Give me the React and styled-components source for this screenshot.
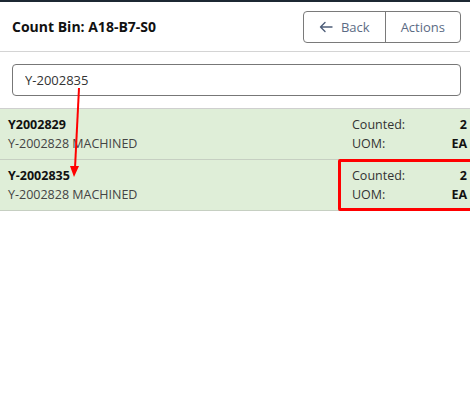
import React from "react";
import styled, { createGlobalStyle } from "styled-components";

const Global = createGlobalStyle`
  html, body { margin: 0; padding: 0; background: #fff; }
  body { font-family: "Open Sans", "Noto Sans", sans-serif; color: #212529; }
`;

const Page = styled.div`
  position: relative;
  width: 470px;
  height: 417px;
  border-top: 2px solid #1c2833;
  box-sizing: border-box;
  overflow: hidden;
`;

const Header = styled.div`
  display: flex;
  align-items: center;
  justify-content: space-between;
  height: 49px;
  padding: 0 9px 0 12px;
  border-bottom: 1px solid #d4d4d4;
`;

const Title = styled.h1`
  margin: 0;
  font-size: 14px;
  font-weight: 700;
  color: #111;
`;

const ButtonGroup = styled.div`
  display: flex;
  height: 32px;
  border: 1px solid #7a7a7a;
  border-radius: 4px;
  box-sizing: border-box;
`;

const GroupButton = styled.button`
  display: flex;
  align-items: center;
  gap: 8px;
  padding: 0 ${p => p.$pad}px;
  border: none;
  border-left: ${p => (p.$divider ? "1px solid #7a7a7a" : "none")};
  background: transparent;
  font-family: inherit;
  font-size: 13px;
  color: #5b6b84;
`;

const SearchArea = styled.div`
  padding: 12px 9px 12px 12px;
  border-bottom: 1px solid #cfcfcf;
`;

const SearchInput = styled.input`
  display: block;
  width: 100%;
  height: 32px;
  box-sizing: border-box;
  padding: 0 12px;
  border: 1px solid #777;
  border-radius: 4px;
  font-family: inherit;
  font-size: 13px;
  color: #333;
  outline: none;
`;

const Row = styled.div`
  display: flex;
  justify-content: space-between;
  align-items: center;
  height: 50px;
  padding: 0 3px 0 8px;
  background: #dfeed8;
  border-bottom: 1px solid #c6cfc2;
  font-size: 12.5px;
  line-height: 19px;
`;

const ItemInfo = styled.div`
  display: flex;
  flex-direction: column;
`;

const ItemCode = styled.span`
  font-weight: 700;
  color: #111;
`;

const ItemDesc = styled.span`
  color: #444;
`;

const Stats = styled.div`
  display: grid;
  grid-template-columns: auto 1fr;
  width: 115px;
  color: #333;
`;

const StatValue = styled.span`
  font-weight: 700;
  text-align: right;
  color: #111;
`;

const Highlight = styled.div`
  position: absolute;
  left: 338px;
  top: 157px;
  width: 140px;
  height: 52px;
  border: 3px solid #f00;
  border-radius: 2px;
  box-sizing: border-box;
  pointer-events: none;
`;

const Overlay = styled.svg`
  position: absolute;
  left: 0;
  top: 0;
  pointer-events: none;
`;

const rows = [
  { code: "Y2002829", desc: "Y-2002828 MACHINED", counted: 2, uom: "EA" },
  { code: "Y-2002835", desc: "Y-2002828 MACHINED", counted: 2, uom: "EA" },
];

export default function App() {
  return (
    <>
      <Global />
      <Page>
        <Header>
          <Title>Count Bin: A18-B7-S0</Title>
          <ButtonGroup>
            <GroupButton $pad={15}>
              <svg width="14" height="12" viewBox="0 0 14 12" fill="none" stroke="#4d5d78" strokeWidth="1.4" strokeLinecap="round" strokeLinejoin="round">
                <path d="M13 6H1.5M6 1.5L1.5 6L6 10.5" />
              </svg>
              Back
            </GroupButton>
            <GroupButton $pad={15} $divider>Actions</GroupButton>
          </ButtonGroup>
        </Header>
        <SearchArea>
          <SearchInput defaultValue="Y-2002835" readOnly />
        </SearchArea>
        {rows.map(r => (
          <Row key={r.code}>
            <ItemInfo>
              <ItemCode>{r.code}</ItemCode>
              <ItemDesc>{r.desc}</ItemDesc>
            </ItemInfo>
            <Stats>
              <span>Counted:</span>
              <StatValue>{r.counted}</StatValue>
              <span>UOM:</span>
              <StatValue>{r.uom}</StatValue>
            </Stats>
          </Row>
        ))}
        <Highlight />
        <Overlay width="470" height="417">
          <line x1="79" y1="86" x2="75" y2="166" stroke="#f00" strokeWidth="2" />
          <polygon points="70,164 79,164 74,175" fill="#f00" />
        </Overlay>
      </Page>
    </>
  );
}
